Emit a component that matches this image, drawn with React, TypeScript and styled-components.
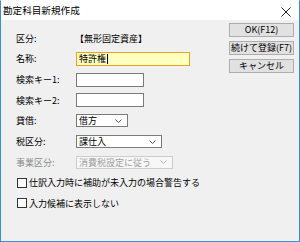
import React from 'react';
import styled, { createGlobalStyle } from 'styled-components';

const GlobalStyle = createGlobalStyle`
  html, body {
    margin: 0;
    padding: 0;
    background: #ffffff;
  }
  body {
    font-family: 'Noto Sans CJK JP', 'Noto Sans', sans-serif;
  }
`;

interface SelectProps {
  value: string;
  width: number;
  disabled?: boolean;
}

const Chevron = ({ disabled }: { disabled?: boolean }) => (
  <svg width="7" height="4" viewBox="0 0 7 4">
    <polyline
      points="0.5,0.5 3.5,3.5 6.5,0.5"
      fill="none"
      stroke={disabled ? '#b4b4b4' : '#505050'}
      strokeWidth="1"
    />
  </svg>
);

const Dropdown = ({ value, width, disabled }: SelectProps) => (
  <SelectBox width={width} disabled={disabled}>
    <SelectText disabled={disabled}>{value}</SelectText>
    <Chevron disabled={disabled} />
  </SelectBox>
);

const App = () => (
  <>
    <GlobalStyle />
    <Window>
      <TitleBar>
        <Title>勘定科目新規作成</Title>
        <Close>
          <svg width="10" height="10" viewBox="0 0 10 10">
            <path d="M0.5 0.5 L9.5 9.5 M9.5 0.5 L0.5 9.5" stroke="#1a1a1a" strokeWidth="1" />
          </svg>
        </Close>
      </TitleBar>
      <Body>
        <Form>
          <Label>区分:</Label>
          <Value>【無形固定資産】</Value>

          <Label>名称:</Label>
          <TextBox width={114} focused>
            特許権<Caret />
          </TextBox>

          <Label>検索キー1:</Label>
          <TextBox width={68} />

          <Label>検索キー2:</Label>
          <TextBox width={68} />

          <Label>貸借:</Label>
          <Dropdown value="借方" width={52} />

          <Label>税区分:</Label>
          <Dropdown value="課仕入" width={86} />

          <Label disabled>事業区分:</Label>
          <Dropdown value="消費税設定に従う" width={97} disabled />

          <CheckRow>
            <CheckBox />
            仕訳入力時に補助が未入力の場合警告する
          </CheckRow>
          <CheckRow>
            <CheckBox />
            入力候補に表示しない
          </CheckRow>
        </Form>
        <Actions>
          <Button>OK(F12)</Button>
          <Button>続けて登録(F7)</Button>
          <Button>キャンセル</Button>
        </Actions>
      </Body>
    </Window>
  </>
);

const Window = styled.div`
  width: 300px;
  height: 242px;
  box-sizing: border-box;
  border: 1px solid #3a8fd9;
  border-top-color: #ffffff;
  display: flex;
  flex-direction: column;
  background: #f0f0f0;
  overflow: hidden;
`;

const TitleBar = styled.div`
  height: 19px;
  background: #ffffff;
  display: flex;
  align-items: center;
  justify-content: space-between;
  padding: 0 8px 0 2px;
`;

const Title = styled.span`
  font-size: 9.6px;
  color: #000000;
  line-height: 1;
  margin-top: 1px;
`;

const Close = styled.span`
  display: flex;
  align-items: center;
  margin-top: 3px;
`;

const Body = styled.div`
  flex: 1;
  display: flex;
  justify-content: space-between;
  background: #f0f0f0;
`;

const Form = styled.div`
  display: grid;
  grid-template-columns: 60px auto;
  grid-auto-rows: 20.65px;
  align-items: center;
  justify-items: start;
  padding: 8px 0 0 15px;
  font-size: 9px;
  color: #000000;
`;

const Label = styled.span<{ disabled?: boolean }>`
  color: ${({ disabled }) => (disabled ? '#8c8c8c' : '#000000')};
  white-space: nowrap;
`;

const Value = styled.span`
  white-space: nowrap;
  margin-left: -1px;
`;

const TextBox = styled.div<{ width: number; focused?: boolean }>`
  box-sizing: border-box;
  width: ${({ width }) => width}px;
  height: 14px;
  border: 1px solid ${({ focused }) => (focused ? '#e8a323' : '#7a7a7a')};
  background: ${({ focused }) => (focused ? '#ffffc0' : '#ffffff')};
  display: flex;
  align-items: center;
  padding-left: 2px;
  white-space: nowrap;
  line-height: 1;
`;

const Caret = styled.span`
  display: inline-block;
  width: 1px;
  height: 10px;
  background: #000000;
  margin-left: 1px;
`;

const SelectBox = styled.div<{ width: number; disabled?: boolean }>`
  box-sizing: border-box;
  width: ${({ width }) => width}px;
  height: 13px;
  border: 1px solid ${({ disabled }) => (disabled ? '#cccccc' : '#7a7a7a')};
  background: ${({ disabled }) => (disabled ? '#f7f7f7' : '#ffffff')};
  display: flex;
  align-items: center;
  justify-content: space-between;
  padding: 0 5px 0 2px;
  white-space: nowrap;
  line-height: 1;
`;

const SelectText = styled.span<{ disabled?: boolean }>`
  color: ${({ disabled }) => (disabled ? '#a0a0a0' : '#000000')};
`;

const CheckRow = styled.label`
  grid-column: 1 / span 2;
  display: flex;
  align-items: center;
  gap: 2px;
  white-space: nowrap;
  margin-left: 1px;
`;

const CheckBox = styled.span`
  box-sizing: border-box;
  width: 10px;
  height: 10px;
  border: 1px solid #333333;
  background: #ffffff;
`;

const Actions = styled.div`
  display: flex;
  flex-direction: column;
  gap: 4.2px;
  padding: 2.5px 5px 0 0;
`;

const Button = styled.div`
  box-sizing: border-box;
  width: 65px;
  height: 14px;
  border: 1px solid #adadad;
  background: #e1e1e1;
  font-size: 9px;
  line-height: 1;
  display: flex;
  align-items: center;
  justify-content: center;
  white-space: nowrap;
  color: #000000;
`;

export default App;
